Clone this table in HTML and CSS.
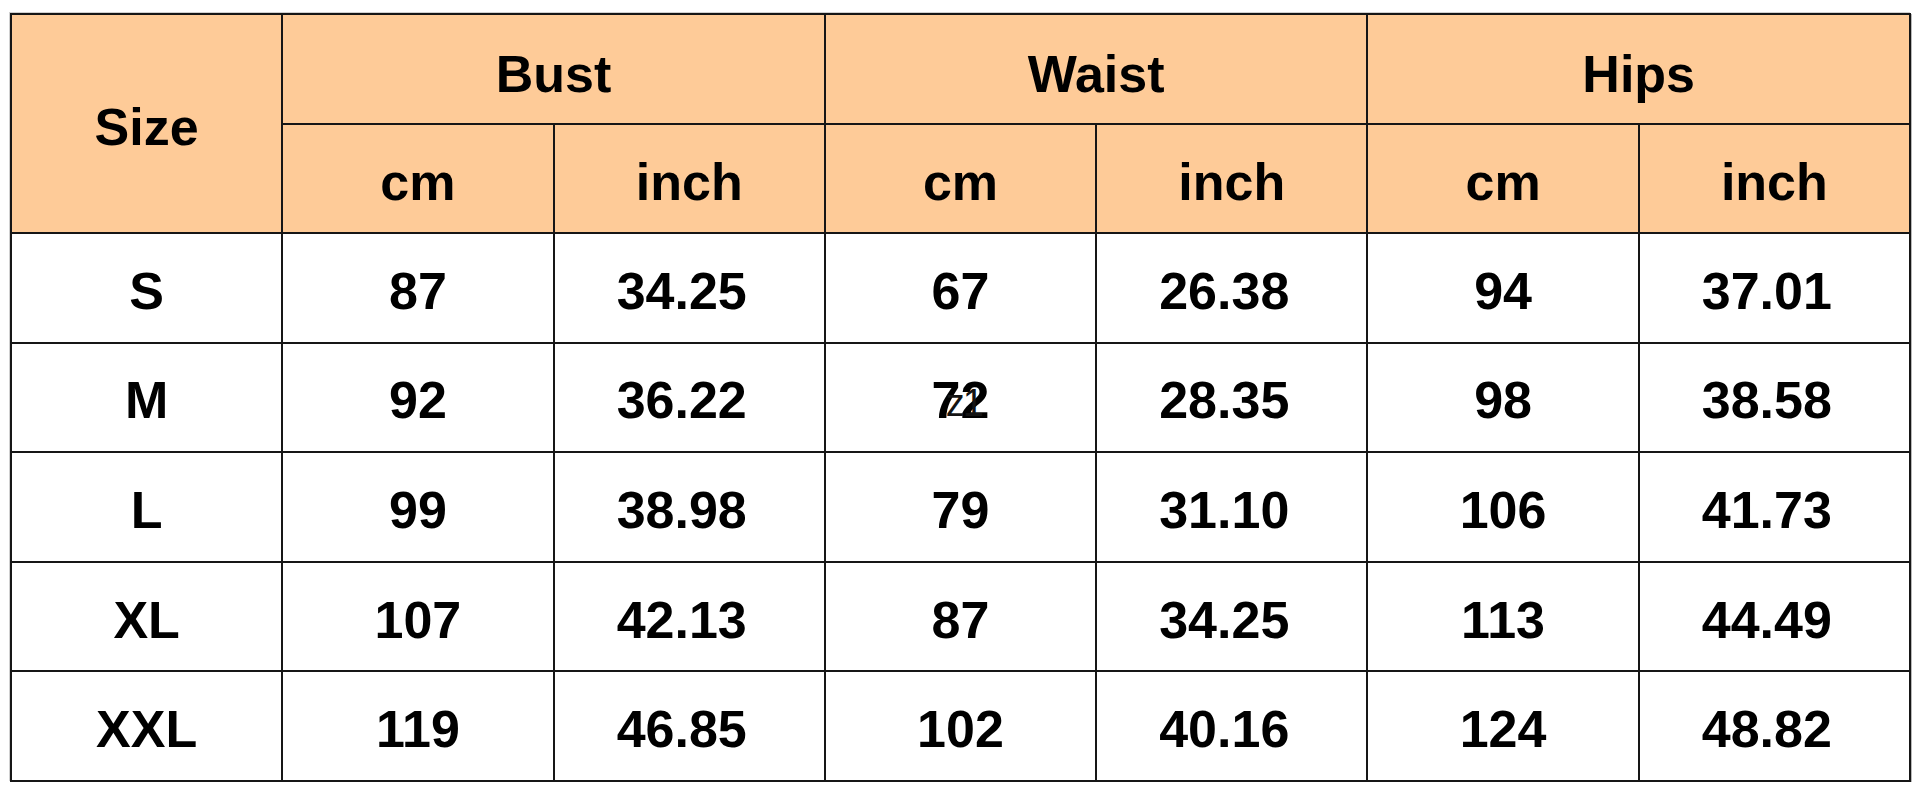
FILE: index.html
```html
<!DOCTYPE html>
<html>
<head>
<meta charset="utf-8">
<link rel="stylesheet" href="styles.css">
</head>
<body>
<div class="chart">
  <div class="cell head size">Size</div>
  <div class="cell head group">Bust</div>
  <div class="cell head group">Waist</div>
  <div class="cell head group">Hips</div>
  <div class="cell head unit">cm</div>
  <div class="cell head unit">inch</div>
  <div class="cell head unit">cm</div>
  <div class="cell head unit">inch</div>
  <div class="cell head unit">cm</div>
  <div class="cell head unit">inch</div>

  <div class="cell">S</div><div class="cell">87</div><div class="cell dec">34.25</div><div class="cell">67</div><div class="cell dec">26.38</div><div class="cell">94</div><div class="cell dec">37.01</div>
  <div class="cell">M</div><div class="cell">92</div><div class="cell dec">36.22</div><div class="cell mark">72<span class="wm">z1</span></div><div class="cell dec">28.35</div><div class="cell">98</div><div class="cell dec">38.58</div>
  <div class="cell">L</div><div class="cell">99</div><div class="cell dec">38.98</div><div class="cell">79</div><div class="cell dec">31.10</div><div class="cell">106</div><div class="cell dec">41.73</div>
  <div class="cell">XL</div><div class="cell">107</div><div class="cell dec">42.13</div><div class="cell">87</div><div class="cell dec">34.25</div><div class="cell">113</div><div class="cell dec">44.49</div>
  <div class="cell">XXL</div><div class="cell">119</div><div class="cell dec">46.85</div><div class="cell">102</div><div class="cell dec">40.16</div><div class="cell">124</div><div class="cell dec">48.82</div>
</div>
</body>
</html>
```
FILE: styles.css
```css
html, body {
  margin: 0;
  padding: 0;
  background: #ffffff;
}

body {
  padding: 13px 0 0 10px;
}

.chart {
  width: 1901px;
  height: 769px;
  box-sizing: border-box;
  display: grid;
  grid-template-columns: repeat(7, 1fr);
  grid-template-rows: repeat(7, 1fr);
  gap: 2px;
  padding: 2px;
  background: #161616;
  box-shadow: 1px 1px 0 #b8b8b8, -1px -1px 0 #d0d0d0;
  font-family: "Liberation Sans", Arial, sans-serif;
  font-weight: bold;
  font-size: 52px;
  color: #000;
}

.cell {
  background: #ffffff;
  display: flex;
  align-items: center;
  justify-content: center;
  padding-top: 6px;
  box-sizing: border-box;
  line-height: 1;
}

.head {
  background: #fecb98;
}

.size {
  grid-row: 1 / span 2;
}

.group {
  grid-column: span 2;
  padding-top: 10px;
}

.unit {
  padding-top: 7px;
}

.dec {
  padding-right: 15px;
}

.mark {
  position: relative;
}

.wm {
  position: absolute;
  left: 120px;
  top: 40px;
  font-family: "Liberation Sans", sans-serif;
  font-weight: normal;
  font-size: 38px;
  line-height: 1;
  color: #141414;
  letter-spacing: -2px;
}
```
